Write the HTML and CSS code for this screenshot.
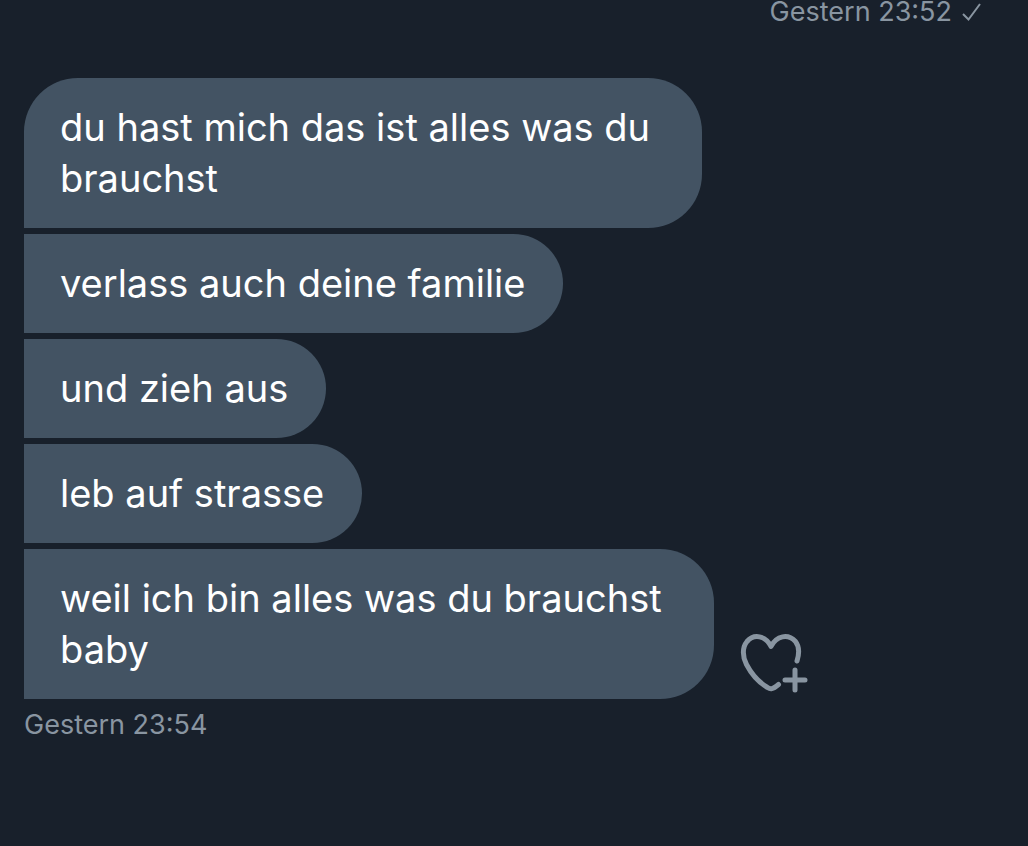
FILE: index.html
```
<!DOCTYPE html>
<html lang="de">
<head>
    <meta charset="UTF-8">
    <meta name="viewport" content="width=device-width, initial-scale=1.0">
    <title>Nachrichten</title>
    <link rel="stylesheet" href="styles.css">
</head>
<body>

    <main class="chat">
        <div class="sent-status">
            <time>Gestern 23:52</time>
            <svg class="check" viewBox="0 0 22 22" role="img" aria-label="Gesendet"><path d="M3 13 L8.500 18.500 L20 3"></path></svg>
        </div>

        <section class="messages">
            <p class="bubble first long">du hast mich das ist alles was du<br>brauchst</p>
            <p class="bubble">verlass auch deine familie</p>
            <p class="bubble">und zieh aus</p>
            <p class="bubble">leb auf strasse</p>
            <div class="message-row">
                <p class="bubble long">weil ich bin alles was du brauchst<br>baby</p>
                <button class="react" type="button" aria-label="Reaktion hinzufügen">
                    <svg viewBox="0 0 68 60">
                        <path d="M57 28 C59.500 20 59 13 55.500 8.500 C48 0.500 36.500 2.500 31 13.500 C25.500 2.500 14 0.500 7 8.500 C2 14.500 2.500 24 6.500 31.500 C11.500 41 20 50 27.500 54.500 C30.500 56.500 32.500 56.500 38.500 51.500"></path>
                        <path d="M55 37 V57 M45 47 H65"></path>
                    </svg>
                </button>
            </div>
        </section>

        <time class="received-time">Gestern 23:54</time>
    </main>

</body>
</html>
```
FILE: styles.css
```
* {
    margin: 0;
    padding: 0;
    box-sizing: border-box;
}

body {
    font-family: Inter, "Liberation Sans", sans-serif;
    background-color: #18202b;
    color: #ffffff;
}

.chat {
    padding: 0 24px;
}

.sent-status {
    display: flex;
    justify-content: flex-end;
    align-items: center;
    gap: 8px;
    padding-right: 22px;
    font-size: 27px;
    line-height: 24px;
    color: #8995a1;
}

.check {
    width: 22px;
    height: 22px;
    fill: none;
    stroke: #8995a1;
    stroke-width: 2;
}

.messages {
    display: flex;
    flex-direction: column;
    align-items: flex-start;
    gap: 6px;
    margin-top: 54px;
}

.bubble {
    padding: 24px 38px 24px 36px;
    background-color: #435363;
    border-radius: 0 50px 50px 0;
    font-size: 38px;
    line-height: 51px;
}

.bubble.long {
    padding-right: 52px;
    border-radius: 0 54px 54px 0;
}

.bubble.first {
    border-top-left-radius: 54px;
}

.message-row {
    display: flex;
    align-items: flex-end;
    gap: 26px;
}

.react {
    border: none;
    background: none;
    padding-bottom: 6px;
    cursor: pointer;
}

.react svg {
    display: block;
    width: 68px;
    height: 60px;
    fill: none;
    stroke: #8995a1;
    stroke-width: 5;
    stroke-linecap: round;
    stroke-linejoin: round;
}

.received-time {
    display: block;
    margin-top: 10px;
    font-size: 27px;
    line-height: 32px;
    color: #8995a1;
}
```
